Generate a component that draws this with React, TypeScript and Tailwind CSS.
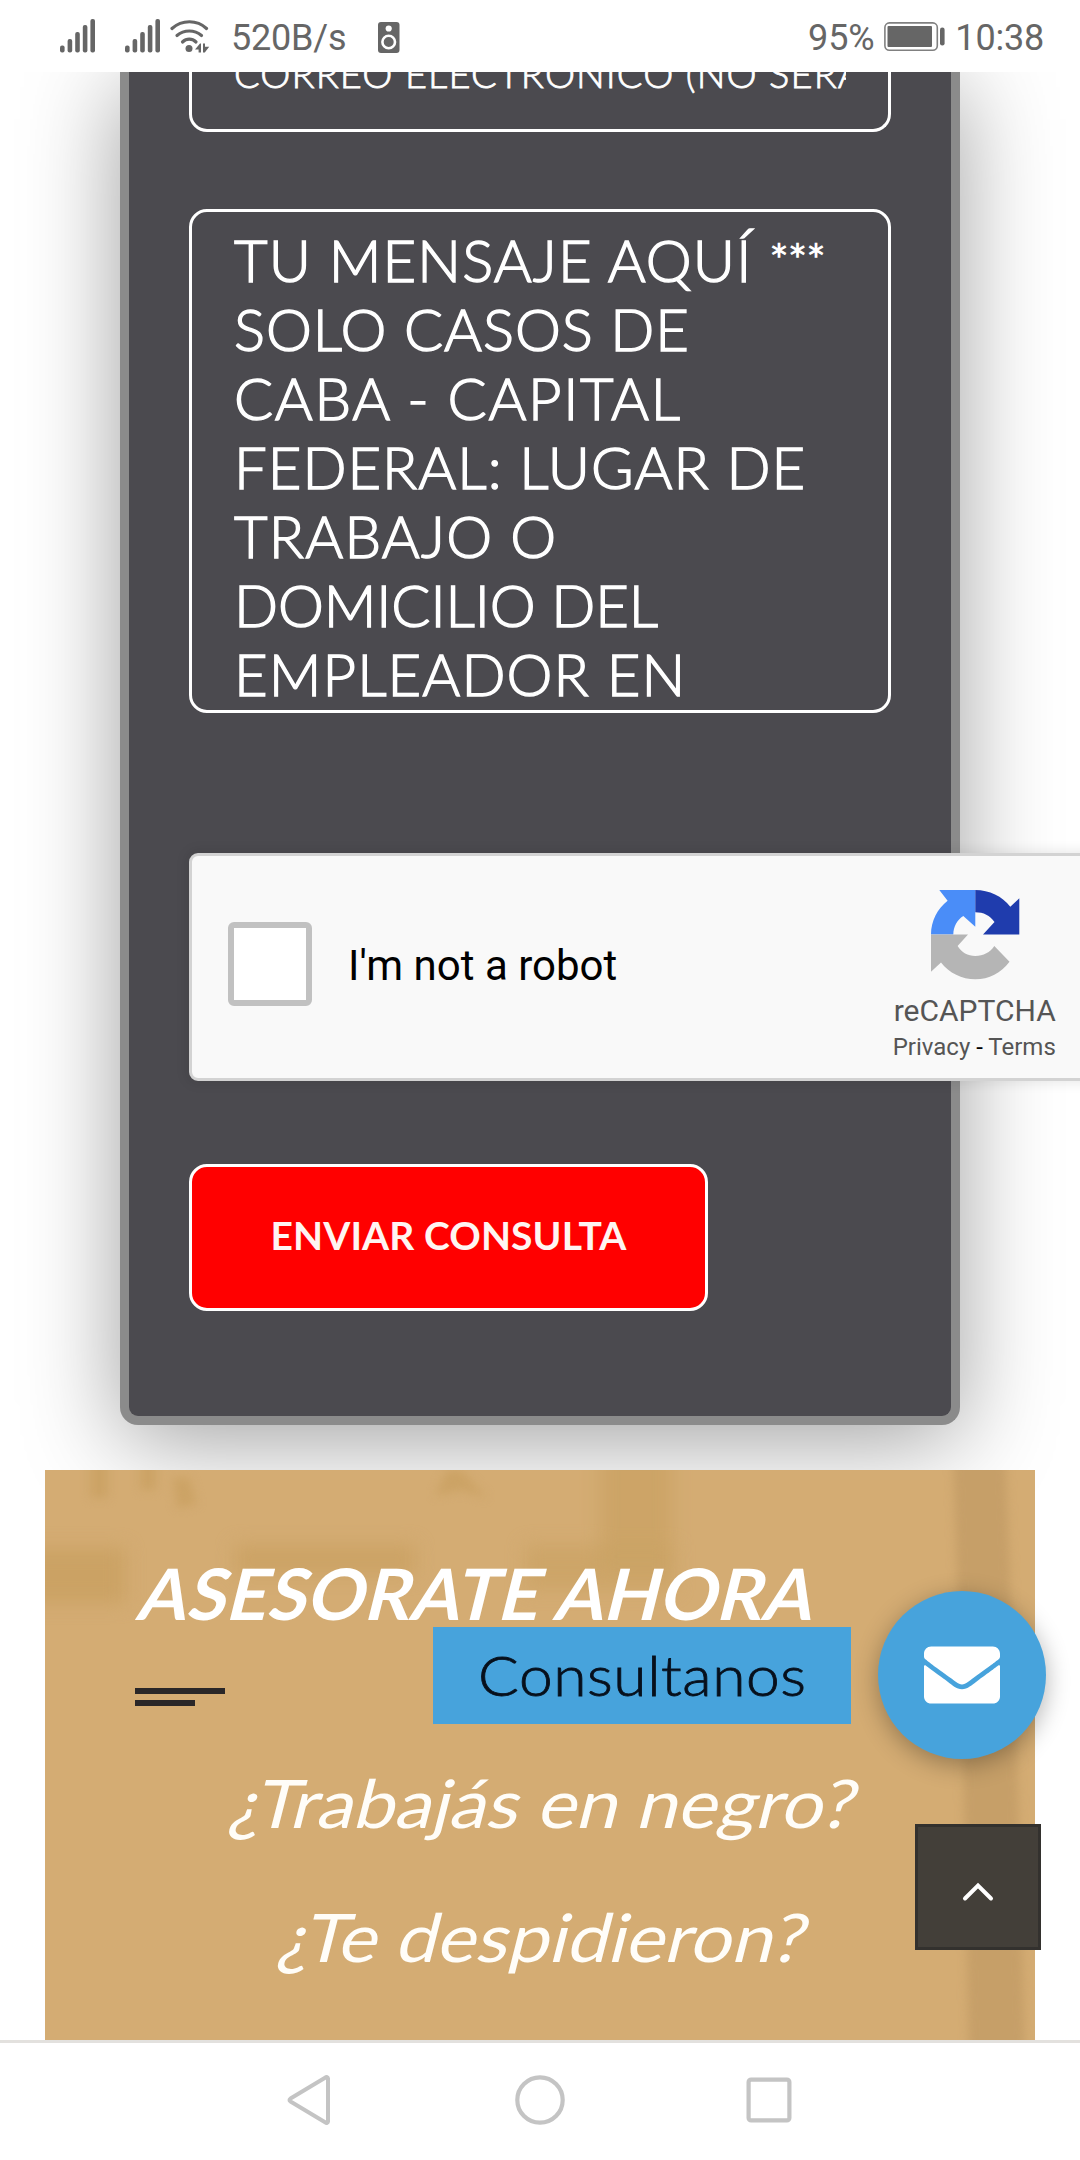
import React from "react";
import { FaEnvelope } from "react-icons/fa";

const messageLines = [
  { text: "SOLO CASOS DE", tracking: "tracking-[0.9px]" },
  { text: "CABA - CAPITAL", tracking: "tracking-[1.6px]" },
  { text: "FEDERAL: LUGAR DE", tracking: "tracking-[1px]" },
  { text: "TRABAJO O", tracking: "tracking-[1.2px]" },
  { text: "DOMICILIO DEL", tracking: "tracking-[-0.1px]" },
  { text: "EMPLEADOR EN", tracking: "tracking-[1.1px]" },
];

function SignalIcon() {
  return (
    <svg width="36" height="34" viewBox="0 0 36 34" fill="#666">
      <rect x="0" y="26.5" width="4.6" height="7" rx="2" />
      <rect x="7.6" y="20" width="4.6" height="13.5" rx="2" />
      <rect x="15.2" y="13" width="4.6" height="20.5" rx="2" />
      <rect x="22.8" y="6" width="4.6" height="27.5" rx="2" />
      <rect x="30.4" y="0" width="4.6" height="33.5" rx="2" />
    </svg>
  );
}

function WifiIcon() {
  return (
    <svg width="40" height="34" viewBox="0 0 40 34" fill="none" stroke="#666" strokeWidth="3.2" strokeLinecap="round">
      <path d="M2 9.500C12 .5 27 .5 36.500 9.500" />
      <path d="M7 16.500c7-6 17.500-6 24.500 0" />
      <path d="M12.500 23c4-3.800 9.500-3.800 13.500 0" />
      <g fill="#666" stroke="none">
        <circle cx="19" cy="29.500" r="3.500" />
        <path d="M25 30.500 30 24.500h1v9h-2.400v-3z" />
        <path d="M33 24.500h2v3.200h4.200l-4.400 5.800H33z" />
      </g>
    </svg>
  );
}

function SpeakerIcon() {
  return (
    <svg width="22" height="31" viewBox="0 0 22 31">
      <rect width="21.500" height="31" rx="3" fill="#666" />
      <circle cx="10.700" cy="6.500" r="3.100" fill="#fff" />
      <circle cx="10.700" cy="20" r="6.300" fill="#666" stroke="#fff" strokeWidth="2.600" />
    </svg>
  );
}

function BatteryIcon() {
  return (
    <svg width="62" height="30" viewBox="0 0 62 30">
      <rect x=".9" y=".9" width="52.400" height="27.400" rx="4.500" fill="none" stroke="#808080" strokeWidth="1.600" />
      <rect x="3.500" y="4" width="44.500" height="21" rx="1" fill="#666" />
      <rect x="56" y="5.500" width="4.600" height="18" rx="2.200" fill="#666" />
    </svg>
  );
}

function RecaptchaLogo() {
  return (
    <svg width="89" height="90" viewBox="0 0 89 90">
      <path fill="#4a8df8" d="M8.300 0h36v36.700L32.300 26C26 30 22.500 36.500 22.300 44.500H0C0 31 6.500 18.500 16.600 10.700z" />
      <path fill="#1f3cad" d="M44.300 0c14 0 27 6.300 35 16.700l9-8.400v36.200H52L63.500 32c-4.500-6.500-11-9.700-19.200-9.700z" />
      <path fill="#b5b5b5" d="M0 44.500h37L26.600 56c4 6.500 10.200 10 17.700 10 8 0 15-3.700 19-10l15.200 15.700C70 83 58 89.300 44.300 89.300 31 89.300 18 83 10 72.500L0 81.700z" />
    </svg>
  );
}

function StatusBar() {
  return (
    <header className="flex h-[72px] w-full shrink-0 items-center bg-white pl-[60px] pr-[36px] font-['Roboto',sans-serif] text-[36px] leading-[42px] text-[#666]">
      <SignalIcon />
      <span className="ml-[29px] flex"><SignalIcon /></span>
      <span className="ml-[9px] flex"><WifiIcon /></span>
      <span className="ml-[21px] mt-[3px] tracking-[-0.2px]">520B/s</span>
      <span className="ml-[32px] mt-[2px] flex"><SpeakerIcon /></span>
      <span className="ml-auto mt-[3px] tracking-[-0.2px]">95%</span>
      <span className="ml-[10px] mt-[2px] flex"><BatteryIcon /></span>
      <span className="ml-[9px] mt-[3px] tracking-[-0.2px]">10:38</span>
    </header>
  );
}

function Recaptcha() {
  return (
    <div className="mt-[140px] flex h-[228px] w-[912px] shrink-0 rounded-[9px] border-3 border-[#d3d3d3] bg-[#f9f9f9] font-['Roboto',sans-serif] shadow-[0_0_12px_3px_rgba(0,0,0,0.08)]">
      <div className="ml-[36px] mt-[66px] size-[84px] rounded-[6px] border-6 border-[#c1c1c1] bg-white" />
      <p className="ml-[36px] mt-[85px] text-[42px] leading-[50px] text-black">I'm not a robot</p>
      <div className="ml-[274px] flex w-[166px] flex-col items-center pt-[34px] text-[#555]">
        <div className="ml-[2px]"><RecaptchaLogo /></div>
        <p className="mt-[13px] pl-[1px] text-[30px] leading-[36px]">reCAPTCHA</p>
        <p className="mt-[3px] whitespace-nowrap text-[24px] leading-[30px]">
          Privacy <span className="text-black">-</span> Terms
        </p>
      </div>
    </div>
  );
}

function ContactForm() {
  return (
    <section className="ml-[120px] flex h-[1353px] w-[840px] shrink-0 flex-col rounded-b-[18px] border-9 border-t-0 border-[#8b8b8b] bg-[#4b4a4f] px-[60px] text-white shadow-[0_15px_96px_rgba(0,0,0,0.38)]">
      <div className="h-[60px] w-[702px] shrink-0 rounded-b-[18px] border-3 border-t-0 border-white px-[42px]">
        <div className="h-full overflow-hidden">
          <p className="-mt-[21px] whitespace-nowrap text-[38px] font-light leading-[45px] tracking-[1.1px] [-webkit-text-stroke:0.8px_white]">CORREO ELECTRÓNICO (NO SERÁ PUBLICADO)</p>
        </div>
      </div>
      <div className="mt-[77px] h-[504px] w-[702px] shrink-0 overflow-hidden rounded-[18px] border-3 border-white px-[42px] pt-[13px] text-[58px] font-light leading-[69px] [-webkit-text-stroke:1.4px_white]">
        <p className="whitespace-nowrap tracking-[1.1px]">
          TU MENSAJE AQUÍ <span className="relative -top-[5px] text-[46px] leading-[40px] tracking-[-1px]">***</span>
        </p>
        {messageLines.map((line) => (
          <p key={line.text} className={`whitespace-nowrap ${line.tracking}`}>{line.text}</p>
        ))}
      </div>
      <Recaptcha />
      <button className="mt-[83px] h-[147px] w-[519px] shrink-0 whitespace-nowrap rounded-[18px] border-3 border-white bg-[#ff0000] pb-[6px] text-[39px] font-bold leading-[46px] tracking-[0.1px] text-[#fff5f2]">
        ENVIAR CONSULTA
      </button>
    </section>
  );
}

function PhotoTint() {
  return (
    <svg className="absolute inset-0" width="990" height="570" viewBox="0 0 990 570">
      <defs>
        <filter id="soft" x="-20%" y="-20%" width="140%" height="140%" colorInterpolationFilters="sRGB">
          <feGaussianBlur stdDeviation="9" />
        </filter>
        <filter id="softer" x="-20%" y="-20%" width="140%" height="140%" colorInterpolationFilters="sRGB">
          <feGaussianBlur stdDeviation="5" />
        </filter>
      </defs>
      <g filter="url(#soft)" fill="#cba264">
        <path d="M-20 78H80v55H-20z" />
        <path d="M190 75h180v30H190z" opacity=".9" />
        <path d="M480 75h150v45H480z" opacity=".7" />
        <path d="M555-20h72v120h-72z" opacity=".8" />
      </g>
      <g filter="url(#softer)" fill="#cba264">
        <path d="M45-10h18v38H45zM95-10h16v30H95zM128 8h16l8 26-20 4zM402 0h14l26 28-26-8-26 6z" opacity=".9" />
        <path d="M908-20h52l12 300 8 310h-56l-6-300z" fill="#c49d67" opacity=".9" />
      </g>
    </svg>
  );
}

function AdviceSection() {
  return (
    <section className="relative ml-[45px] mt-[45px] h-[570px] w-[990px] shrink-0 overflow-hidden bg-[#d4ac73] text-[#fffdf8]">
      <PhotoTint />
      <div className="relative flex flex-col items-start pl-[90px] pt-[83px]">
        <h2 className="origin-left -skew-x-[14deg] whitespace-nowrap pl-[7px] text-[71px] font-bold leading-[80px] tracking-[0.35px] text-white">ASESORATE AHORA</h2>
        <div className="mt-[55px] h-[6px] w-[90px] bg-[#2a2728]" />
        <div className="mt-[6px] h-[6px] w-[60px] bg-[#2a2728]" />
      </div>
      <div className="relative mt-[29px] flex flex-col items-center pl-[11px] text-[67px] leading-[134px]">
        <p className="scale-x-[1.105] -skew-x-[13deg] whitespace-nowrap">¿Trabajás en negro?</p>
        <p className="scale-x-[1.1] -skew-x-[13deg] whitespace-nowrap">¿Te despidieron?</p>
      </div>
    </section>
  );
}

function FloatingActions() {
  return (
    <>
      <div className="absolute left-[433px] top-[1591px] flex items-center gap-[27px]">
        <div className="flex h-[97px] w-[418px] items-center justify-center bg-[#47a3dc] text-[55px] font-light leading-[64px] tracking-[0.5px] text-[#07101c] [-webkit-text-stroke:0.8px_#07101c]">
          <span className="scale-x-[1.1]">Consultanos</span>
        </div>
        <div className="flex size-[168px] items-center justify-center rounded-full bg-[#47a3dc] text-white shadow-[0_6px_24px_rgba(0,0,0,0.3)]">
          <FaEnvelope size={76} />
        </div>
      </div>
      <div className="absolute left-[915px] top-[1824px] flex size-[126px] items-center justify-center border-3 border-[#33312e] bg-[#433f39]">
        <svg className="mt-[10px]" width="32" height="20" viewBox="0 0 32 20" fill="none" stroke="#fff" strokeWidth="4" strokeLinecap="round">
          <path d="M3 16.500 16 3.500l13 13" />
        </svg>
      </div>
    </>
  );
}

function NavigationBar() {
  return (
    <nav className="flex h-[120px] w-full shrink-0 items-start justify-between border-t-3 border-[#e3e1de] bg-white pl-[286px] pr-[288px] pt-[31px]">
      <svg width="46" height="52" viewBox="0 0 46 52" fill="none" stroke="#c4c4c4" strokeWidth="4" strokeLinejoin="round">
        <path d="M42 4.500a1.500 1.500 0 0 0-2.500-1L4.500 24.500q-2 1.500 0 3L39.500 48.500a1.500 1.500 0 0 0 2.500-1z" />
      </svg>
      <svg className="ml-[2px]" width="52" height="52" viewBox="0 0 52 52" fill="none" stroke="#c4c4c4" strokeWidth="4.200">
        <circle cx="26" cy="26" r="22.700" />
      </svg>
      <svg width="46" height="52" viewBox="0 0 46 52" fill="none" stroke="#c4c4c4" strokeWidth="4.200">
        <rect x="2.600" y="5.600" width="40.800" height="40.800" rx="2.500" />
      </svg>
    </nav>
  );
}

export default function App() {
  return (
    <div className="relative flex h-[2160px] w-[1080px] flex-col overflow-hidden bg-white font-['Lato',sans-serif]">
      <StatusBar />
      <main className="flex h-[1968px] w-full shrink-0 flex-col overflow-hidden bg-white">
        <ContactForm />
        <AdviceSection />
      </main>
      <NavigationBar />
      <FloatingActions />
    </div>
  );
}
